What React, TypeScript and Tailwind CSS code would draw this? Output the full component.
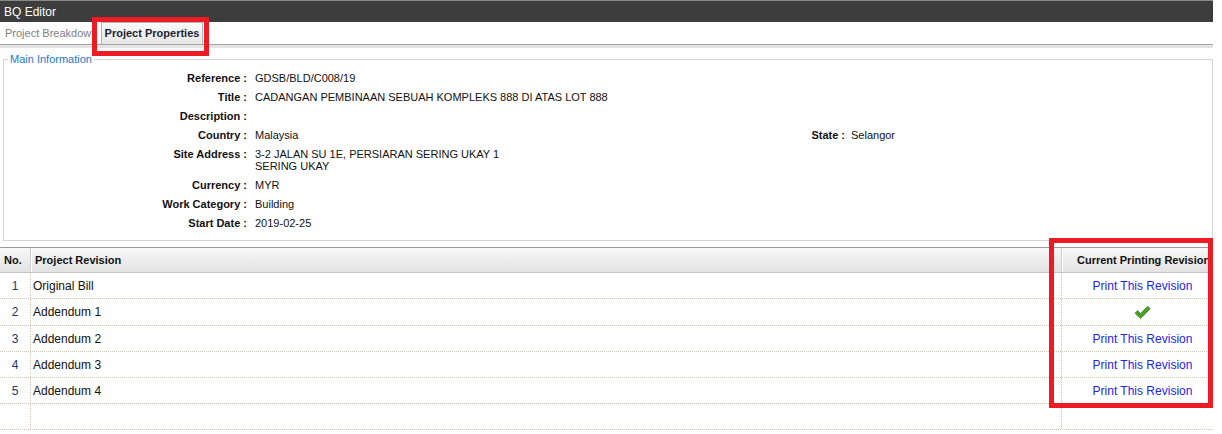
import React from "react";

const info: { label: string; value: string[] }[] = [
  { label: "Reference", value: ["GDSB/BLD/C008/19"] },
  { label: "Title", value: ["CADANGAN PEMBINAAN SEBUAH KOMPLEKS 888 DI ATAS LOT 888"] },
  { label: "Description", value: [""] },
  { label: "Country", value: ["Malaysia"] },
  { label: "Site Address", value: ["3-2 JALAN SU 1E, PERSIARAN SERING UKAY 1", "SERING UKAY"] },
  { label: "Currency", value: ["MYR"] },
  { label: "Work Category", value: ["Building"] },
  { label: "Start Date", value: ["2019-02-25"] },
];

const revisions = [
  { no: "1", name: "Original Bill", current: false },
  { no: "2", name: "Addendum 1", current: true },
  { no: "3", name: "Addendum 2", current: false },
  { no: "4", name: "Addendum 3", current: false },
  { no: "5", name: "Addendum 4", current: false },
];

function Check() {
  return (
    <svg width="17" height="15" viewBox="0 0 17 15">
      <path
        d="M1 8.2 L3.6 5.6 L6.6 8.6 L13.6 1.2 L16.2 3.8 L6.6 13.6 Z"
        fill="#4a9e2c"
        stroke="#3d8a22"
        strokeWidth="0.8"
        strokeLinejoin="round"
      />
    </svg>
  );
}

export default function App() {
  return (
    <div className="relative w-[1222px] h-[434px] overflow-hidden bg-white font-['Liberation_Sans',Arial,sans-serif] text-[11px] text-[#111]">
      <div className="w-[1213px]">
        {/* title bar */}
        <div className="h-[22px] bg-[#3d3d3d] border-t border-[#8a8a8a] flex items-center pl-[4px] text-white text-[12px]">
          BQ Editor
        </div>

        {/* tab strip */}
        <div className="h-[23px] flex items-end border-b border-[#a4a4a4]">
          <div className="h-[21px] pl-[5px] pr-[8px] flex items-center text-[#808080] w-[101px] overflow-hidden whitespace-nowrap">
            Project Breakdown
          </div>
          <div className="h-[22px] w-[102px] flex items-center justify-center border border-b-0 border-[#b5b5b5] bg-gradient-to-b from-[#fafafa] to-[#e6e6e6] font-bold text-[#1c2433] whitespace-nowrap">
            Project Properties
          </div>
        </div>
        <div className="h-[3px] bg-[#e4e4e4]" />

        {/* main information */}
        <fieldset className="ml-[3px] mt-[5px] border border-[#d4d4d4] pb-[11px] pt-[6px]">
          <legend className="ml-[4px] px-[2px] text-[#1a7ac9] leading-[13px]">Main Information</legend>
          <div className="flex flex-col gap-[7px]">
            {info.map((row) => (
              <div key={row.label} className="flex leading-[12px]">
                <div className="w-[243px] shrink-0 text-right font-bold whitespace-pre">
                  {row.label + " :"}
                </div>
                <div className="ml-[8px] w-[522px] flex flex-col">
                  {row.value.map((v, i) => (
                    <span key={i} className="h-[12px]">
                      {v}
                    </span>
                  ))}
                </div>
                {row.label === "Country" && (
                  <div className="flex">
                    <div className="w-[68px] text-right font-bold whitespace-pre">State :</div>
                    <div className="ml-[6px]">Selangor</div>
                  </div>
                )}
              </div>
            ))}
          </div>
        </fieldset>

        {/* revisions grid */}
        <div className="mt-[6px]">
          <div className="grid grid-cols-[31px_1031px_151px] h-[26px] border-t border-[#9c9c9c] border-b border-b-[#c4c4c4] bg-gradient-to-b from-[#f8f8f8] to-[#e2e2e2] font-bold">
            <div className="flex items-center pl-[4px] border-r border-[#cfcfcf]">No.</div>
            <div className="flex items-center pl-[3px] border-l border-white border-r border-r-[#cfcfcf]">Project Revision</div>
            <div className="flex items-center pl-[14px] border-l border-white whitespace-nowrap overflow-hidden">
              Current Printing Revision
            </div>
          </div>
          {revisions.map((r) => (
            <div
              key={r.no}
              className={`grid grid-cols-[31px_1031px_151px] border-b border-dotted border-[#cbc3b4] text-[12px] ${r.current ? "h-[27px]" : "h-[26px]"}`}
            >
              <div className="flex items-center justify-center text-[#1b3a6b] border-r border-dotted border-[#cbc3b4]">
                {r.no}
              </div>
              <div className="flex items-center pl-[2px] border-r border-dotted border-[#cbc3b4]">{r.name}</div>
              <div className="flex items-center justify-center pl-[10px] whitespace-nowrap">
                {r.current ? (
                  <Check />
                ) : (
                  <span className="text-[#2424f0] cursor-pointer">Print This Revision</span>
                )}
              </div>
            </div>
          ))}
          <div className="grid grid-cols-[31px_1031px_151px] h-[26px] border-b border-dotted border-[#cbc3b4]">
            <div className="border-r border-dotted border-[#cbc3b4]" />
            <div className="border-r border-dotted border-[#cbc3b4]" />
            <div />
          </div>
        </div>
      </div>

      {/* annotation boxes */}
      <div className="absolute left-[92px] top-[17px] w-[117px] h-[39px] border-[5px] border-[#ed1c24]" />
      <div className="absolute left-[1049px] top-[238px] w-[164px] h-[170px] border-[5px] border-[#ed1c24]" />
    </div>
  );
}
